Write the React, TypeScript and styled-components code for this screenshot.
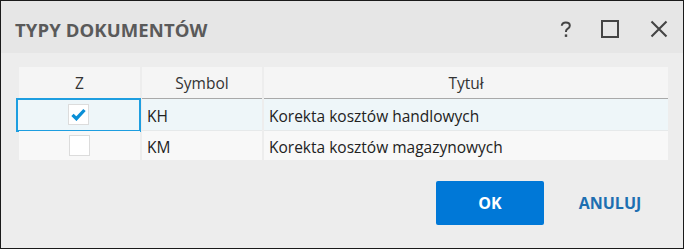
import * as React from 'react'
import styled, { createGlobalStyle } from 'styled-components'

const GlobalStyle = createGlobalStyle`
  html, body { margin: 0; padding: 0; background: #ededed; }
  * { box-sizing: border-box; }
`

const font = `"Segoe UI", "Open Sans", "Noto Sans", sans-serif`

interface Row {
  checked: boolean,
  symbol: string,
  title: string,
}

const rows: Row[] = [
  { checked: true, symbol: 'KH', title: 'Korekta kosztów handlowych' },
  { checked: false, symbol: 'KM', title: 'Korekta kosztów magazynowych' },
]

const App: React.FC = () => {
  const [data, setData] = React.useState(rows)
  const [selected, setSelected] = React.useState(0)

  const toggle = (i: number) => {
    setSelected(i)
    setData(d => d.map((r, j) => j === i ? { ...r, checked: !r.checked } : r))
  }

  return (
    <>
      <GlobalStyle />
      <Dialog>
        <TitleBar>
          <Title>TYPY DOKUMENTÓW</Title>
          <TitleButtons>
            <TitleButton aria-label="Pomoc">
              <svg width="12" height="17" viewBox="0 0 12 17">
                <path d="M1.8 4.8C1.8 2.7 3.5 1.5 5.8 1.5s4 1.3 4 3.2c0 1.7-1.1 2.4-2.3 3.1C6.5 8.4 6 9 6 10.2v.8"
                  fill="none" stroke="#444" strokeWidth="2" />
                <rect x="4.8" y="13.4" width="2.4" height="2.5" fill="#444" />
              </svg>
            </TitleButton>
            <TitleButton gap={24} aria-label="Maksymalizuj">
              <svg width="18" height="18" viewBox="0 0 18 18">
                <rect x="1" y="1" width="16" height="16" fill="none" stroke="#444" strokeWidth="2" />
              </svg>
            </TitleButton>
            <TitleButton gap={29} aria-label="Zamknij">
              <svg width="18" height="18" viewBox="0 0 18 18">
                <path d="M1.5 1.5l15 15M16.5 1.5l-15 15" stroke="#444" strokeWidth="2.1" />
              </svg>
            </TitleButton>
          </TitleButtons>
        </TitleBar>
        <Body>
          <Grid>
            <HeaderCell>Z</HeaderCell>
            <HeaderCell>Symbol</HeaderCell>
            <HeaderCell>Tytuł</HeaderCell>
            {data.map((r, i) => (
              <React.Fragment key={r.symbol}>
                <CheckCell selected={i === selected} focused={i === selected} onClick={() => toggle(i)}>
                  <CheckBox>
                    {r.checked && (
                      <svg width="15" height="13" viewBox="0 0 15 13">
                        <path d="M1.5 6.8l3.9 3.9L13.5 2" fill="none" stroke="#0a8fd6" strokeWidth="3.3" />
                      </svg>
                    )}
                  </CheckBox>
                </CheckCell>
                <Cell selected={i === selected} onClick={() => setSelected(i)}>{r.symbol}</Cell>
                <Cell selected={i === selected} onClick={() => setSelected(i)}>{r.title}</Cell>
              </React.Fragment>
            ))}
          </Grid>
          <Footer>
            <PrimaryButton>OK</PrimaryButton>
            <LinkButton>ANULUJ</LinkButton>
          </Footer>
        </Body>
      </Dialog>
    </>
  )
}

export default App

type CellProps = { selected?: boolean, focused?: boolean }

const Dialog = styled.div`
  width: 684px; height: 249px; border: 1px solid #1a1a1a; background: #ededed;
  display: flex; flex-direction: column; font-family: ${font};
`
const TitleBar = styled.div`
  height: 52px; background: #e6e6e6; display: flex; align-items: center;
  padding: 0 14px 0 14px; flex-shrink: 0;
`
const Title = styled.div`
  flex: 1; font-size: 18.5px; font-weight: 700; color: #5a5a5a; letter-spacing: 0.1px; padding-top: 4px;
`
const TitleButtons = styled.div` display: flex; align-items: center; padding-top: 4px; `
const TitleButton = styled.div<{ gap?: number }>`
  width: 20px; height: 20px; display: flex; align-items: center; justify-content: center; cursor: pointer;
  margin-left: ${p => p.gap || 0}px;
`
const Body = styled.div`
  flex: 1; display: flex; flex-direction: column; padding: 14px 15px 0 18px;
`
const Grid = styled.div`
  display: grid; grid-template-columns: 121px 120px 1fr; column-gap: 2px;
  grid-template-rows: 32px 32px 29px;
`
const HeaderCell = styled.div`
  background: #f5f5f5; border-bottom: 1px solid #a9a9a9; font-size: 15.5px; color: #333;
  display: flex; align-items: center; justify-content: center; padding-top: 1px;
`
const Cell = styled.div<CellProps>`
  background: ${p => p.selected ? '#eef6f9' : '#f8f8f8'}; font-size: 15.5px; color: #222;
  display: flex; align-items: center; padding: 3px 0 0 5px; cursor: default;
  ${p => p.selected ? 'border-bottom: 1px solid #e6e9ea;' : ''}
`
const CheckCell = styled(Cell)`
  justify-content: center; padding: 0;
  ${p => p.focused ? 'outline: 2px solid #1e9ee0; outline-offset: -1px; margin-left: -2px;' : ''}
`
const CheckBox = styled.div`
  width: 21px; height: 21px; background: #fff; border: 1px solid #dcdcdc;
  display: flex; align-items: center; justify-content: center;
`
const Footer = styled.div`
  display: flex; justify-content: flex-end; gap: 12px; padding: 21px 4px 0 0;
`
const PrimaryButton = styled.button`
  width: 108px; height: 44px; border: none; border-radius: 2px; background: #0078d7;
  color: #fff; font-family: ${font}; font-size: 16px; font-weight: 700; cursor: pointer;
`
const LinkButton = styled(PrimaryButton)`
  background: transparent; color: #1d6fb1;
`
